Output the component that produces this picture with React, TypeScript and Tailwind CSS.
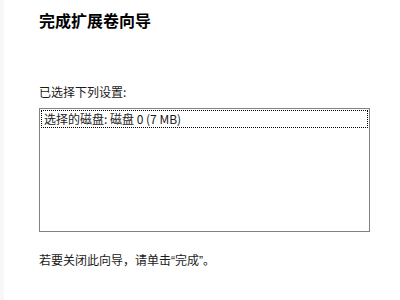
import React from 'react';

// Selected settings shown in the summary list
const settings: string[] = ['选择的磁盘: 磁盘 0 (7 MB)'];

const App: React.FC = () => {
  return (
    <div
      className="flex w-[400px] h-[300px] bg-white text-black"
      style={{ fontFamily: '"Noto Sans CJK SC", "Noto Sans", sans-serif' }}
    >
      {/* Faint edge on the left side */}
      <div className="w-[4px] h-full bg-[#f7f7f7]" />

      <div className="flex flex-col pl-[35px] pt-[9px]">
        {/* Wizard title */}
        <h1 className="text-[16px] leading-[22px] font-bold">完成扩展卷向导</h1>

        {/* Settings summary */}
        <p className="mt-[53px] text-[12px] leading-[16px] text-[#1a1a1a]">已选择下列设置:</p>
        <div className="mt-[8px] w-[331px] h-[124px] border border-[#828282] bg-white p-px">
          {settings.map((item, i) => (
            <div
              key={i}
              className="h-[18px] pl-[2px] text-[12px] leading-[16px] border border-dotted border-black text-[#1a1a1a]"
            >
              {item}
            </div>
          ))}
        </div>

        {/* Closing hint */}
        <p className="mt-[20px] text-[12px] leading-[16px] text-[#1a1a1a]">
          若要关闭此向导，请单击
          <span className="font-['Liberation_Sans',sans-serif]">“</span>
          完成
          <span className="font-['Liberation_Sans',sans-serif]">”</span>。
        </p>
      </div>
    </div>
  );
};

export default App;
